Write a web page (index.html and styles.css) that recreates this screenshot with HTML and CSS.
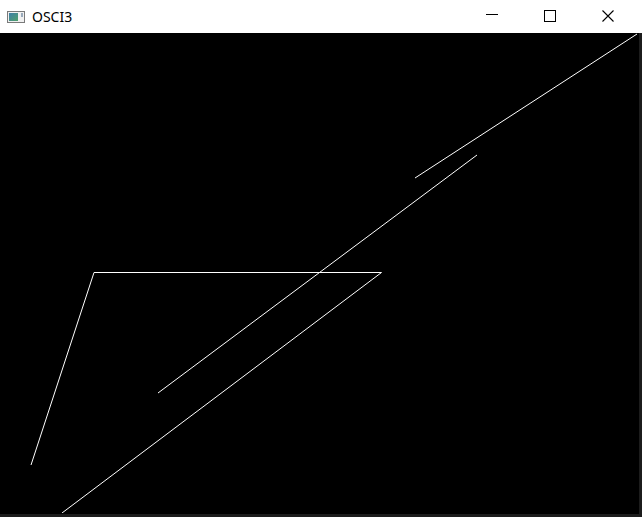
FILE: index.html
```html
<!DOCTYPE html>
<html>
<head>
<meta charset="utf-8">
<link rel="stylesheet" href="styles.css">
</head>
<body>
<div class="window">
  <div class="titlebar">
    <div class="title">
      <svg class="appicon" width="18" height="12" viewBox="0 0 18 12">
        <rect x="0.5" y="0.5" width="17" height="11" fill="#f0f0f0" stroke="#7a7a7a"/>
        <defs><linearGradient id="g" x1="0" y1="0" x2="1" y2="1"><stop offset="0" stop-color="#3f7fa8"/><stop offset="1" stop-color="#4fa06a"/></linearGradient></defs>
        <rect x="2" y="2" width="9" height="8" fill="url(#g)"/>
        <rect x="14" y="2" width="2" height="4" fill="#9ab"/>
      </svg>
      <span class="name">OSCI3</span>
    </div>
    <div class="controls">
      <div class="btn"><svg width="12" height="12" viewBox="0 0 12 12"><line x1="0" y1="4.5" x2="12" y2="4.5" stroke="#000" stroke-width="1"/></svg></div>
      <div class="btn"><svg width="12" height="12" viewBox="0 0 12 12"><rect x="0.5" y="0.5" width="11" height="11" fill="none" stroke="#000"/></svg></div>
      <div class="btn"><svg width="12" height="12" viewBox="0 0 12 12"><path d="M0.5 0.5 L11.5 11.5 M11.5 0.5 L0.5 11.5" stroke="#000" stroke-width="1.1"/></svg></div>
    </div>
  </div>
  <div class="client">
    <svg class="canvas" width="639" height="480" viewBox="0 33 639 480">
      <polyline points="31,465 94,272.5 381.5,272.5 62,513" fill="none" stroke="#fff" stroke-width="1"/>
      <line x1="158" y1="393" x2="477" y2="155" stroke="#fff" stroke-width="1"/>
      <line x1="415" y1="178" x2="637" y2="34" stroke="#fff" stroke-width="1"/>
    </svg>
  </div>
</div>
</body>
</html>
```
FILE: styles.css
```css
html, body { margin: 0; padding: 0; background: #fff; }
.window { width: 642px; height: 517px; display: flex; flex-direction: column; overflow: hidden; }
.titlebar { height: 33px; background: #fff; display: flex; justify-content: space-between; align-items: stretch; }
.title { display: flex; align-items: center; padding-left: 7px; gap: 7px; }
.appicon { display: block; margin-top: 1px; }
.name { font-family: "Noto Sans", "Open Sans", sans-serif; font-size: 14px; color: #000; margin-top: 0; }
.controls { display: flex; padding-right: 5px; }
.btn { width: 58px; display: flex; align-items: center; justify-content: center; margin-top: -1px; }
.btn svg { display: block; }
.client { flex: 1; background: #000; border-right: 3px solid #1c1c1c; border-bottom: 3px solid #1c1c1c; box-sizing: border-box; }
.canvas { display: block; }
```
